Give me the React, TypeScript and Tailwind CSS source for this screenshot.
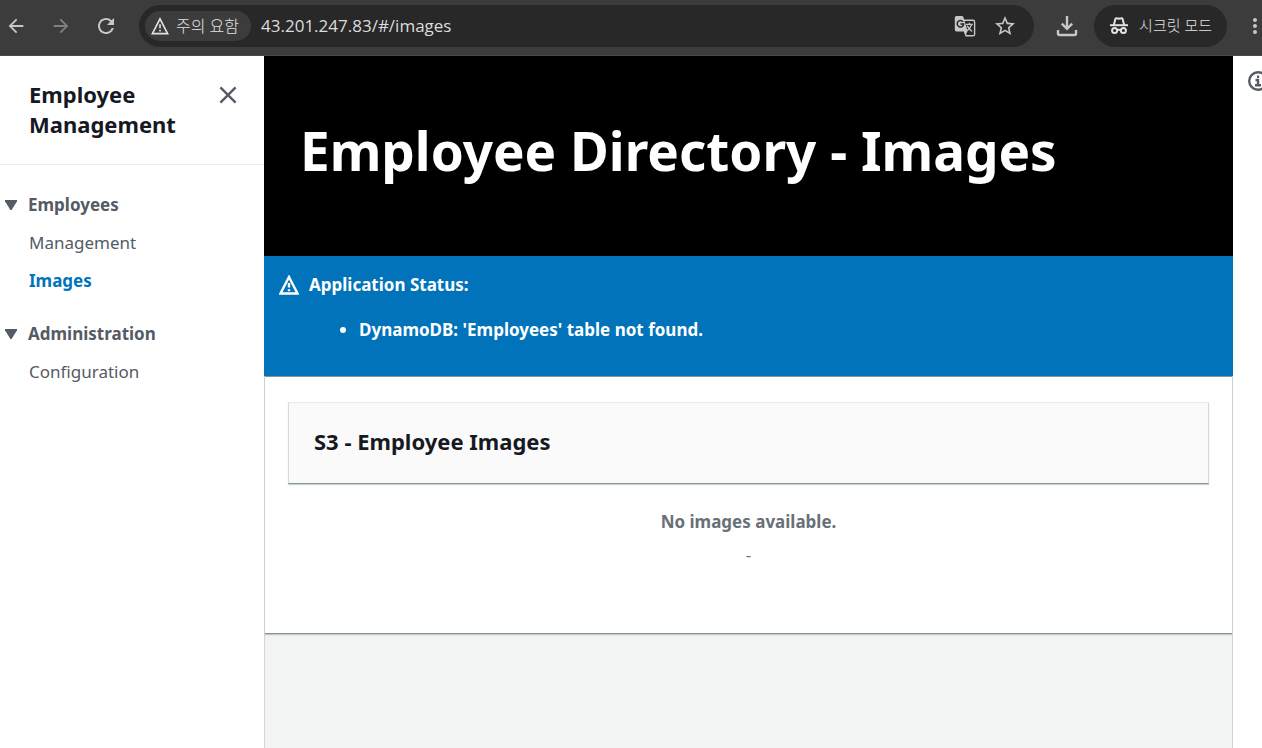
import type { ReactNode } from "react";
import {
  MdArrowBack,
  MdArrowForward,
  MdMoreVert,
  MdRefresh,
  MdStarOutline,
} from "react-icons/md";

const navSections = [
  {
    title: "Employees",
    links: [
      { text: "Management", href: "#/" },
      { text: "Images", href: "#/images" },
    ],
  },
  {
    title: "Administration",
    links: [{ text: "Configuration", href: "#/config" }],
  },
];

const activeHref = "#/images";

function WarningIcon({ className }: { className?: string }) {
  return (
    <svg viewBox="0 0 20 20" fill="none" stroke="currentColor" className={className}>
      <path d="M10 2 18.5 18.5H1.5Z" />
      <path d="M10 8v4.5M10 14.2v2" />
    </svg>
  );
}

function TranslateIcon() {
  return (
    <svg viewBox="0 0 22 22" fill="none" stroke="currentColor" className="size-[22px]">
      <path d="M10 5.2h9q1.6 0 1.6 1.6v12.4q0 1.6-1.6 1.6h-7L10.5 16" strokeWidth="1.4" />
      <path fill="currentColor" stroke="none" d="M2.5 1H8q1 0 1.3 1L13.6 16l-2.2 4.6L10 16.4H2.5Q.8 16.4.8 14.7V2.7Q.8 1 2.5 1Z" />
      <path d="M9 6.9a3.2 3.2 0 1 0 .6 2.2H6.4" stroke="#282828" strokeWidth="1.5" />
      <path d="M11.8 9.4h7M15.4 7.8v1.6M17.6 9.6q-1.2 4-4.8 6.2M13.2 10.6q1.6 3.4 4.8 6" strokeWidth="1.3" />
    </svg>
  );
}

function DownloadIcon() {
  return (
    <svg viewBox="0 0 22 22" fill="none" stroke="currentColor" strokeWidth="2.4" className="size-[22px]">
      <path d="M11 1v13M5.8 8.6 11 13.8l5.2-5.2M2 15v3.5q0 1.5 1.5 1.5h15q1.5 0 1.5-1.5V15" />
    </svg>
  );
}

function IncognitoIcon() {
  return (
    <svg viewBox="0 0 20 20" fill="none" stroke="currentColor" strokeWidth="2" className="size-5 shrink-0">
      <path d="M1 9.2h18" />
      <path d="M4.8 9 6.4 3q.3-1 1.3-.7l2.3.5 2.3-.5q1-.3 1.3.7L15.2 9" />
      <circle cx="5.6" cy="14.6" r="2.5" />
      <circle cx="14.4" cy="14.6" r="2.5" />
      <path d="M8 14.2q2-1 4 0" />
    </svg>
  );
}

function ToolbarButton({ label, children }: { label: string; children: ReactNode }) {
  return (
    <button type="button" aria-label={label} className="flex size-6 shrink-0 items-center justify-center">
      {children}
    </button>
  );
}

function BrowserBar() {
  return (
    <div className="flex h-14 items-center overflow-hidden border-b border-[#4a4a4a] bg-[#3c3c3c] pb-1 text-[#c7c7c7]">
      <div className="flex shrink-0 gap-[21px] pl-1">
        <ToolbarButton label="Back">
          <MdArrowBack className="size-[22px]" />
        </ToolbarButton>
        <span className="flex text-[#808080]">
          <ToolbarButton label="Forward">
            <MdArrowForward className="size-[22px]" />
          </ToolbarButton>
        </span>
        <ToolbarButton label="Reload">
          <MdRefresh className="size-6" />
        </ToolbarButton>
      </div>
      <div className="ml-[21px] flex h-[42px] min-w-0 flex-1 items-center rounded-full bg-[#282828] pr-[17px] pl-[6px]">
        <button
          type="button"
          className="flex h-[30px] shrink-0 items-center gap-[7px] rounded-full bg-[#3c3c3c] pr-3 pl-[6px] text-[16px] font-light text-[#e3e3e3]"
        >
          <WarningIcon className="size-[18px] stroke-[1.8]" />
          주의 요함
        </button>
        <input
          aria-label="Address"
          defaultValue="43.201.247.83/#/images"
          className="ml-[10px] min-w-0 flex-1 bg-transparent font-['Open_Sans',sans-serif] text-[17px] text-[#dcdcdc] outline-none"
        />
        <div className="flex shrink-0 gap-4">
          <ToolbarButton label="Translate">
            <TranslateIcon />
          </ToolbarButton>
          <ToolbarButton label="Bookmark">
            <MdStarOutline className="size-6" />
          </ToolbarButton>
        </div>
      </div>
      <div className="mr-[15px] ml-[21px] flex shrink-0">
        <ToolbarButton label="Downloads">
          <DownloadIcon />
        </ToolbarButton>
      </div>
      <button
        type="button"
        className="flex h-[42px] shrink-0 items-center gap-[10px] rounded-full bg-[#282828] px-[15px] text-[15px] font-light text-[#e3e3e3]"
      >
        <IncognitoIcon />
        시크릿 모드
      </button>
      <div className="-mr-[5px] ml-4 flex shrink-0">
        <ToolbarButton label="Menu">
          <MdMoreVert className="size-6" />
        </ToolbarButton>
      </div>
    </div>
  );
}

function SideNavigation() {
  return (
    <nav className="w-[264px] shrink-0 text-[#545b64]">
      <div className="flex items-start justify-between border-b border-[#eaeded] pt-[23px] pr-[26px] pb-[25px] pl-[29px]">
        <h2 className="w-40 text-[22px] leading-[30px] font-bold text-[#16191f]">
          Employee Management
        </h2>
        <button type="button" aria-label="Close navigation" className="mt-[6px]">
          <svg viewBox="0 0 20 20" stroke="currentColor" strokeWidth="2.4" className="size-5">
            <path d="m2.4 2.4 15.2 15.2M17.6 2.4 2.4 17.6" />
          </svg>
        </button>
      </div>
      <div className="flex flex-col gap-[15px] pt-[21px]">
        {navSections.map((section) => (
          <section key={section.title}>
            <button
              type="button"
              className="flex h-[38px] items-center gap-[11px] pl-[5px] text-[17px] font-bold"
            >
              <svg viewBox="0 0 12 10" fill="currentColor" className="h-[10px] w-3">
                <path d="M0 0h12v1.2L6.6 10H5.4L0 1.2Z" />
              </svg>
              {section.title}
            </button>
            <ul>
              {section.links.map((link) => (
                <li key={link.href} className="flex h-[38px] items-center pl-[29px] text-[17px]">
                  <a
                    href={link.href}
                    className={link.href === activeHref ? "font-bold text-[#0073bb]" : ""}
                  >
                    {link.text}
                  </a>
                </li>
              ))}
            </ul>
          </section>
        ))}
      </div>
    </nav>
  );
}

function StatusBar() {
  return (
    <div className="flex gap-[10px] bg-[#0073bb] px-[15px] pt-[15px] pb-[33px] text-[17px] leading-[27px] font-bold text-white">
      <WarningIcon className="mt-1 size-5 shrink-0 stroke-[2.4]" />
      <div>
        <p>Application Status:</p>
        <ul className="mt-[18px] list-disc pl-[50px]">
          <li>DynamoDB: 'Employees' table not found.</li>
        </ul>
      </div>
    </div>
  );
}

function ImagesContainer() {
  return (
    <section className="border-y border-[#879596] bg-white px-[23px] pt-[25px] pb-16 shadow-[0_1px_1px_0_rgba(0,28,36,0.2)]">
      <div className="border border-t-[#eaeded] border-r-[#d5dbdb] border-b-[#879596] border-l-[#d5dbdb] bg-[#fafafa] px-[25px] pt-[22px] pb-[26px] shadow-[0_1px_1px_0_rgba(0,28,36,0.2)]">
        <h2 className="text-[22px] leading-8 font-bold text-[#16191f]">S3 - Employee Images</h2>
      </div>
      <div className="pt-6 text-center text-[17px] leading-7 text-[#687078]">
        <p className="font-bold">No images available.</p>
        <p className="mt-[5px]">-</p>
      </div>
    </section>
  );
}

export default function App() {
  return (
    <div className="flex min-h-screen flex-col bg-white font-['Noto_Sans','Noto_Sans_CJK_KR',sans-serif]">
      <BrowserBar />
      <div className="flex flex-1">
        <SideNavigation />
        <main className="flex min-w-0 flex-1 flex-col bg-[#f2f3f3]">
          <header className="bg-black px-9 pt-[59px] pb-[69px]">
            <h1 className="text-[53px] leading-[72px] font-bold text-white">
              Employee Directory - Images
            </h1>
          </header>
          <StatusBar />
          <div className="flex-1 border-x border-[#d0d6d8]">
            <ImagesContainer />
          </div>
        </main>
        <aside className="w-[29px] shrink-0 overflow-hidden pt-[15px] pl-[15px] text-[#545b64]">
          <button type="button" aria-label="Open help panel">
            <svg viewBox="0 0 20 20" fill="none" stroke="currentColor" strokeWidth="2.4" className="size-5">
              <circle cx="10" cy="10" r="8.8" />
              <path d="M7.5 9H10v5M7 14.2h6M9 5.8h2.2" />
            </svg>
          </button>
        </aside>
      </div>
    </div>
  );
}
